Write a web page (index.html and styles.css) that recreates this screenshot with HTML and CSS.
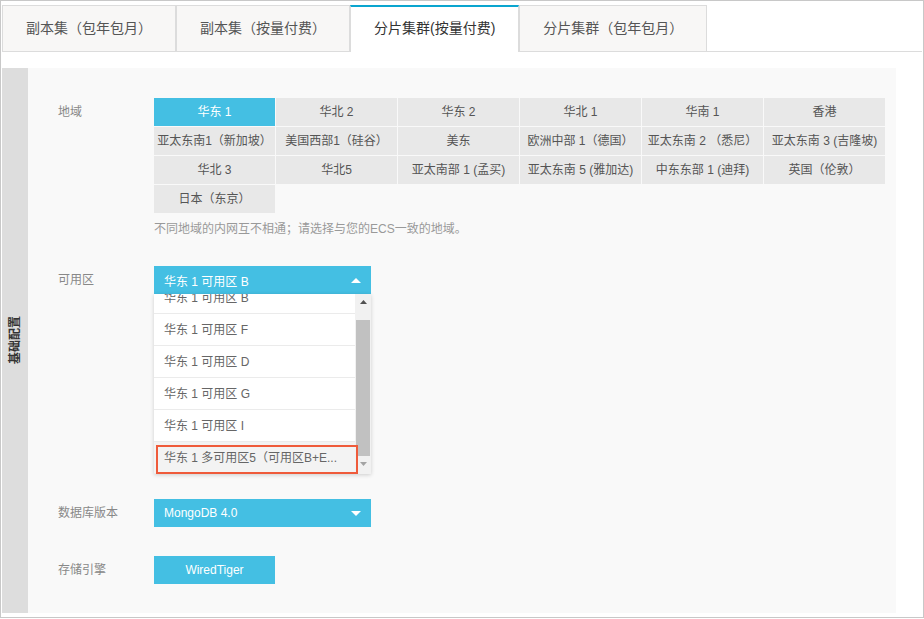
FILE: index.html
```html
<!DOCTYPE html>
<html lang="zh-CN">
<head>
<meta charset="utf-8">
<title>分片集群</title>
<link rel="stylesheet" href="styles.css">
</head>
<body>
<div class="frame">
  <div class="tabs">
    <div class="tab">副本集（包年包月）</div>
    <div class="tab">副本集（按量付费）</div>
    <div class="tab active">分片集群(按量付费)</div>
    <div class="tab">分片集群（包年包月）</div>
  </div>
  <div class="main">
    <div class="side"><span class="side-text">基础配置</span></div>
    <div class="panel">
      <div class="row">
        <div class="label">地域</div>
        <div class="field">
          <div class="regions">
            <div class="cell on">华东 1</div>
            <div class="cell">华北 2</div>
            <div class="cell">华东 2</div>
            <div class="cell">华北 1</div>
            <div class="cell">华南 1</div>
            <div class="cell">香港</div>
            <div class="cell">亚太东南1（新加坡）</div>
            <div class="cell">美国西部1（硅谷）</div>
            <div class="cell">美东</div>
            <div class="cell">欧洲中部 1（德国）</div>
            <div class="cell">亚太东南 2 （悉尼）</div>
            <div class="cell">亚太东南 3 (吉隆坡)</div>
            <div class="cell">华北 3</div>
            <div class="cell">华北5</div>
            <div class="cell">亚太南部 1 (孟买)</div>
            <div class="cell">亚太东南 5 (雅加达)</div>
            <div class="cell">中东东部 1 (迪拜)</div>
            <div class="cell">英国（伦敦）</div>
            <div class="cell">日本（东京）</div>
          </div>
          <div class="hint">不同地域的内网互不相通；请选择与您的ECS一致的地域。</div>
        </div>
      </div>

      <div class="row row-zone">
        <div class="label">可用区</div>
        <div class="field">
          <div class="select">
            <span>华东 1 可用区 B</span>
            <svg class="caret" width="10" height="5" viewBox="0 0 10 5"><path d="M0 5 L5 0 L10 5 Z" fill="#fff"/></svg>
          </div>
          <div class="menu">
            <div class="items">
              <div class="items-inner">
                <div class="item">华东 1 可用区 B</div>
                <div class="item">华东 1 可用区 F</div>
                <div class="item">华东 1 可用区 D</div>
                <div class="item">华东 1 可用区 G</div>
                <div class="item">华东 1 可用区 I</div>
                <div class="item hover">华东 1 多可用区5（可用区B+E...</div>
              </div>
            </div>
            <div class="sb">
              <div class="sb-btn"><svg width="7" height="4" viewBox="0 0 7 4"><path d="M0 4 L3.5 0 L7 4 Z" fill="#505050"/></svg></div>
              <div class="sb-thumb"></div>
              <div class="sb-btn sb-down"><svg width="7" height="4" viewBox="0 0 7 4"><path d="M0 0 L3.5 4 L7 0 Z" fill="#a3a3a3"/></svg></div>
            </div>
            <div class="mark"></div>
          </div>
        </div>
      </div>

      <div class="row row-db">
        <div class="label">数据库版本</div>
        <div class="field">
          <div class="select">
            <span>MongoDB 4.0</span>
            <svg class="caret" width="10" height="5" viewBox="0 0 10 5"><path d="M0 0 L5 5 L10 0 Z" fill="#fff"/></svg>
          </div>
        </div>
      </div>

      <div class="row row-engine">
        <div class="label">存储引擎</div>
        <div class="field">
          <div class="btn">WiredTiger</div>
        </div>
      </div>
    </div>
  </div>
</div>
</body>
</html>
```

FILE: styles.css
```css
html, body {
  margin: 0;
  padding: 0;
  background: #fff;
}
body {
  font-family: "Liberation Sans", "Noto Sans CJK SC", sans-serif;
  font-size: 12px;
  color: #555;
}
.frame {
  width: 924px;
  height: 618px;
  box-sizing: border-box;
  border: 1px solid #c8c8c8;
  padding: 4px 1px 0 1px;
}
.tabs {
  display: flex;
  height: 46px;
  border-bottom: 1px solid #dcdcdc;
}
.tab {
  height: 46px;
  box-sizing: border-box;
  padding: 0 23px;
  border: 1px solid #dcdcdc;
  border-bottom: none;
  background: #f8f7f6;
  color: #555;
  font-size: 14px;
  line-height: 44px;
  white-space: nowrap;
}
.tab.active {
  height: 47px;
  margin-bottom: -1px;
  background: #fff;
  color: #333;
  border-top: 2px solid #0aa5cf;
  line-height: 42px;
}
.main {
  display: flex;
  margin-top: 16px;
  height: 545px;
}
.side {
  width: 26px;
  background: #dddddd;
  display: flex;
  align-items: center;
  justify-content: center;
}
.side-text {
  writing-mode: vertical-rl;
  text-orientation: sideways;
  transform: rotate(180deg);
  font-weight: bold;
  color: #333;
  font-size: 12px;
  line-height: 14px;
}
.panel {
  width: 868px;
  background: #f9f9f9;
  padding: 30px 0 0 30px;
  box-sizing: border-box;
}
.row {
  display: flex;
}
.label {
  width: 96px;
  flex: none;
  line-height: 28px;
  color: #888;
}
.regions {
  display: grid;
  grid-template-columns: repeat(6, 121px);
  grid-auto-rows: 28px;
  gap: 1px;
}
.cell {
  background: #e8e8e8;
  color: #555;
  text-align: center;
  line-height: 28px;
  white-space: nowrap;
}
.cell.on {
  background: #44bfe3;
  color: #fff;
}
.hint {
  margin-top: 8px;
  line-height: 16px;
  color: #999;
}
.row-zone {
  margin-top: 29px;
}
.select {
  width: 217px;
  height: 28px;
  box-sizing: border-box;
  padding: 0 10px;
  background: #44bfe3;
  color: #fff;
  display: flex;
  align-items: center;
  justify-content: space-between;
  font-size: 12px;
}
.caret {
  display: block;
}
.menu {
  position: relative;
  width: 217px;
  height: 180px;
  display: flex;
  background: #fff;
  box-shadow: 0 1px 4px rgba(0, 0, 0, 0.18);
}
.items {
  width: 201px;
  overflow: hidden;
}
.items-inner {
  margin-top: -12px;
}
.item {
  height: 32px;
  box-sizing: border-box;
  border-bottom: 1px solid #ebebeb;
  padding: 1px 0 0 10px;
  line-height: 31px;
  color: #666;
  white-space: nowrap;
}
.item.hover {
  background: #f3f3f3;
}
.sb {
  width: 16px;
  background: #f1f1f1;
  display: flex;
  flex-direction: column;
}
.sb-btn {
  height: 16px;
  display: flex;
  align-items: center;
  justify-content: center;
}
.sb-btn svg {
  display: block;
}
.sb-thumb {
  flex: 1;
  margin: 10px 1px 0 1px;
  background: #c1c1c1;
}
.sb-down {
  margin-bottom: 2px;
}
.mark {
  position: absolute;
  left: 2px;
  top: 151px;
  width: 202px;
  height: 29px;
  box-sizing: border-box;
  border: 2px solid #ef5b3b;
}
.row-db {
  margin-top: 25px;
}
.row-engine {
  margin-top: 29px;
}
.btn {
  width: 121px;
  height: 28px;
  line-height: 28px;
  text-align: center;
  background: #44bfe3;
  color: #fff;
}
```
